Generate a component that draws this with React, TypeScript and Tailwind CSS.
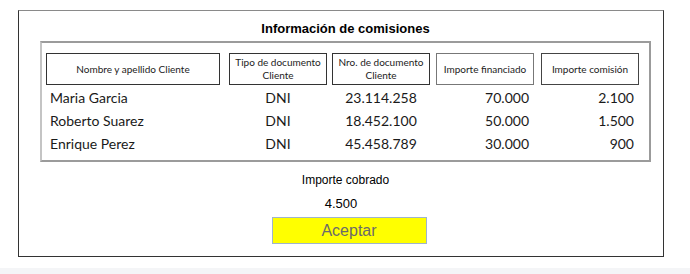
const rows = [
  { name: "Maria Garcia", tipo: "DNI", nro: "23.114.258", financiado: "70.000", comision: "2.100" },
  { name: "Roberto Suarez", tipo: "DNI", nro: "18.452.100", financiado: "50.000", comision: "1.500" },
  { name: "Enrique Perez", tipo: "DNI", nro: "45.458.789", financiado: "30.000", comision: "900" },
]

function HeaderCell({ children, className }: { children: React.ReactNode; className?: string }) {
  return (
    <div
      className={
        "flex h-[32px] items-center justify-center border bg-white text-center text-[10px] leading-[13px] text-[#222] " +
        (className ?? "")
      }
    >
      {children}
    </div>
  )
}

export default function App() {
  return (
    <div className="h-[274px] w-[690px] bg-white font-['Liberation_Sans',Arial,sans-serif]">
      <div className="pt-[10px]">
        <div className="ml-[18px] flex h-[247px] w-[646px] flex-col items-center border border-[#333] border-t-[#8a8a8a]">
          {/* Titulo */}
          <h1 className="mt-[10px] ml-[9px] text-[13px] font-bold leading-[16px] text-black">
            Información de comisiones
          </h1>

          {/* Tabla */}
          <div className="mt-[4px] ml-[9px] h-[121px] w-[611px] border-2 border-[#9b9b9b] border-l-[#c4c4c4] pl-[4px] pt-[10px] font-['Lato','Open_Sans',sans-serif]">
            <div className="flex">
              <HeaderCell className="w-[174px] border-[#333]">Nombre y apellido Cliente</HeaderCell>
              <HeaderCell className="ml-[9px] w-[98px] border-[#333]">
                Tipo de documento
                <br />
                Cliente
              </HeaderCell>
              <HeaderCell className="ml-[5px] w-[98px] border-[#333]">
                Nro. de documento
                <br />
                Cliente
              </HeaderCell>
              <HeaderCell className="ml-[6px] w-[98px] border-[#777]">Importe financiado</HeaderCell>
              <HeaderCell className="ml-[7px] w-[98px] border-[#444]">Importe comisión</HeaderCell>
            </div>

            <div className="mt-[1px]">
              {rows.map((r) => (
                <div key={r.name} className="flex h-[23px] items-center text-[14px] text-[#1a1a1a]">
                  <div className="w-[174px] pl-[4px]">{r.name}</div>
                  <div className="ml-[9px] w-[98px] text-center">{r.tipo}</div>
                  <div className="ml-[5px] w-[98px] text-center">{r.nro}</div>
                  <div className="ml-[6px] w-[98px] pr-[5px] text-right">{r.financiado}</div>
                  <div className="ml-[7px] w-[98px] pr-[5px] text-right">{r.comision}</div>
                </div>
              ))}
            </div>
          </div>

          {/* Importe cobrado */}
          <div className="mt-[11px] ml-[9px] text-[12px] leading-[15px] text-black">Importe cobrado</div>
          <div className="mt-[8px] text-[13px] leading-[16px] text-black">4.500</div>
          <button className="mt-[5px] ml-[16px] h-[27px] w-[155px] border border-[#9fb4cc] bg-[#ffff00] text-[16px] leading-[20px] text-[#6b6b6b]">
            Aceptar
          </button>
        </div>
      </div>
      <div className="mt-[11px] h-[6px] bg-[#f4f5f7]" />
    </div>
  )
}
